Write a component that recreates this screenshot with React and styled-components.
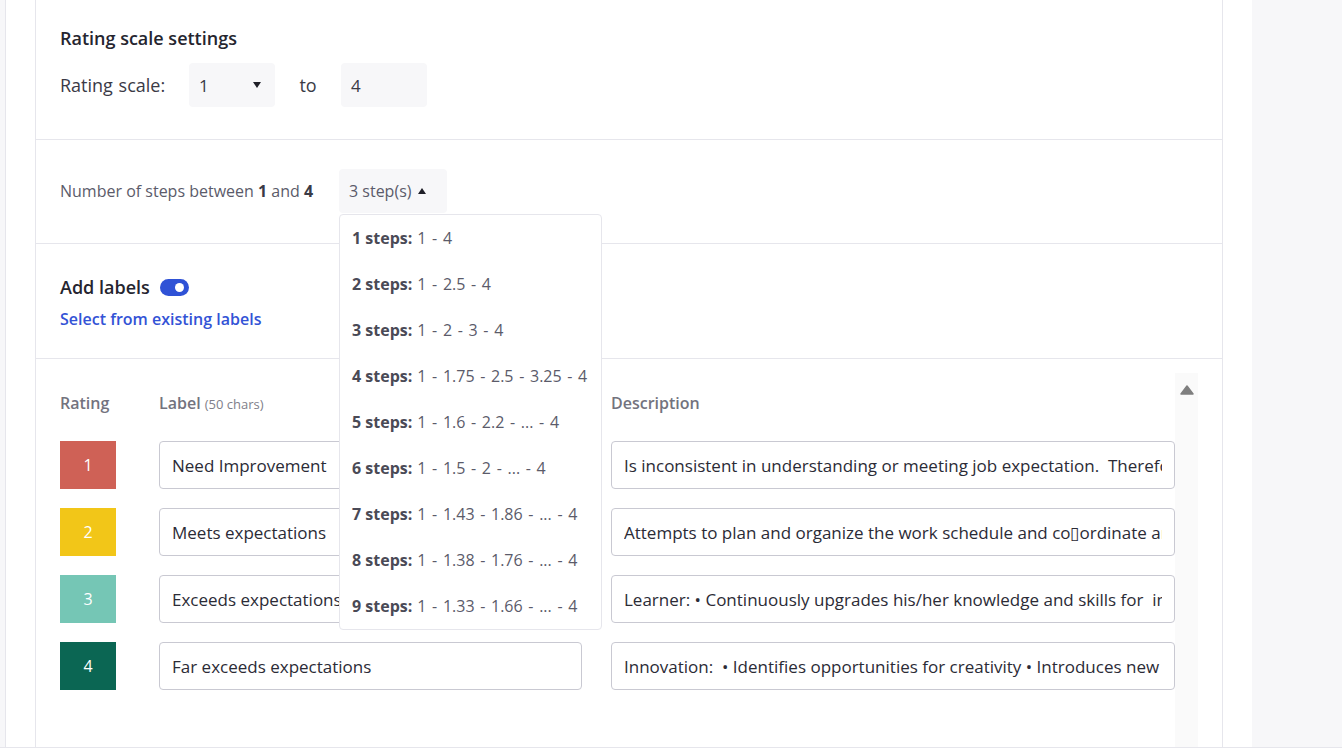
import React from "react";
import styled, { createGlobalStyle } from "styled-components";

const Global = createGlobalStyle`
  html, body { margin: 0; padding: 0; background: #ffffff; }
  body { font-family: "Open Sans", "Noto Sans", sans-serif; color: #2b2b36; }
  * { box-sizing: border-box; }
`;

const Page = styled.div`
  display: flex;
  height: 748px;
  border-bottom: 1px solid #e6e6ec;
  overflow: hidden;
`;

const Gutter = styled.div`
  width: 6px;
  flex: none;
  background: #f7f7f9;
  border-right: 1px solid #e6e6ec;
`;

const Main = styled.div`
  width: 1246px;
  flex: none;
  padding: 0 29px;
  background: #ffffff;
`;

const SidePane = styled.div`
  flex: 1;
  background: #f7f7f9;
`;

const Card = styled.div`
  height: 100%;
  border-left: 1px solid #e6e6ec;
  border-right: 1px solid #e6e6ec;
  position: relative;
`;

const Section = styled.div`
  padding: ${(p) => p.$pad};
  border-bottom: ${(p) => (p.$last ? "none" : "1px solid #e6e6ec")};
  position: relative;
`;

const Title = styled.div`
  font-size: 18px;
  font-weight: 600;
  line-height: 22px;
  color: #25252f;
  display: flex;
  align-items: center;
  gap: 10px;
`;

const ScaleRow = styled.div`
  display: flex;
  align-items: center;
  margin-top: 14px;
  font-size: 18px;
  color: #3a3a46;
`;

const ScaleLabel = styled.span`
  width: 129px;
  word-spacing: 1px;
`;

const ToWord = styled.span`
  width: 66px;
  text-align: center;
`;

const Field = styled.div`
  width: 86px;
  height: 44px;
  background: #f7f7f9;
  border-radius: 4px;
  display: flex;
  align-items: center;
  justify-content: space-between;
  padding: 0 14px 0 10px;
  font-size: 17px;
  color: #3a3a46;
`;

const Caret = styled.span`
  width: 0;
  height: 0;
  border-left: 4.5px solid transparent;
  border-right: 4.5px solid transparent;
  border-${(p) => (p.$up ? "bottom" : "top")}: 6px solid #1f1f28;
`;

const StepsRow = styled.div`
  display: flex;
  align-items: center;
  font-size: 16px;
  color: #5b5b6a;
`;

const StepsText = styled.span`
  width: 279px;
  b { color: #3a3a46; font-weight: 700; }
`;

const StepsButton = styled.div`
  width: 108px;
  height: 44px;
  background: #f7f7f9;
  border-radius: 4px;
  display: flex;
  align-items: center;
  gap: 7px;
  padding-left: 10px;
  font-size: 16px;
  color: #5b5b6a;
  position: relative;
`;

const Menu = styled.div`
  position: absolute;
  top: 45px;
  left: 0;
  width: 263px;
  background: #ffffff;
  border: 1px solid #e6e6ec;
  border-radius: 4px;
  z-index: 10;
`;

const MenuItem = styled.div`
  height: 46px;
  display: flex;
  align-items: center;
  padding-left: 12px;
  font-size: 16px;
  word-spacing: 1.5px;
  color: #5b5b6a;
  white-space: nowrap;
  b { color: #4a4a56; font-weight: 700; margin-right: 5px; word-spacing: 0; }
`;

const Toggle = styled.span`
  width: 29px;
  height: 17px;
  border-radius: 9px;
  background: #2f52d6;
  position: relative;
  &::after {
    content: "";
    position: absolute;
    right: 5px;
    top: 4px;
    width: 9px;
    height: 9px;
    border-radius: 50%;
    background: #fff;
  }
`;

const Link = styled.div`
  margin-top: 11px;
  font-size: 16px;
  font-weight: 600;
  line-height: 20px;
  color: #3353d6;
`;

const TableWrap = styled.div`
  display: flex;
  height: 400px;
`;

const Table = styled.div`
  flex: 1;
  min-width: 0;
  padding-top: 20px;
  display: grid;
  grid-template-columns: 99px 452px minmax(0, 1fr);
  grid-template-rows: 29px repeat(4, 48px);
  row-gap: 19px;
  align-content: start;
`;

const HeadCell = styled.div`
  height: 20px;
  line-height: 20px;
  font-size: 16px;
  font-weight: 600;
  color: #73737e;
  white-space: nowrap;
  small { font-size: 13px; font-weight: 400; color: #80808a; }
`;

const Row = styled.div`
  display: contents;
`;

const Swatch = styled.div`
  width: 56px;
  height: 48px;
  background: ${(p) => p.$color};
  color: #ffffff;
  font-size: 16px;
  display: flex;
  align-items: center;
  justify-content: center;
`;

const TextBox = styled.div`
  width: ${(p) => p.$w};
  min-width: 0;
  height: 48px;
  border: 1px solid #c9c9d2;
  border-radius: 4px;
  display: flex;
  align-items: center;
  padding: 0 12px;
  font-size: 17px;
  color: #2b2b36;
`;

const Clip = styled.span`
  flex: 1;
  min-width: 0;
  white-space: pre;
  overflow: hidden;
`;

const ScrollTrack = styled.div`
  width: 23px;
  flex: none;
  background: #fafafa;
  display: flex;
  justify-content: center;
  padding-top: 12px;
`;

const rows = [
  { n: 1, color: "#cf6156", label: "Need Improvement", desc: "Is inconsistent in understanding or meeting job expectation.  Therefore needs to improve" },
  { n: 2, color: "#f2c618", label: "Meets expectations", desc: "Attempts to plan and organize the work schedule and co\u25AFordinate and prioritize tasks" },
  { n: 3, color: "#75c6b5", label: "Exceeds expectations", desc: "Learner: \u2022 Continuously upgrades his/her knowledge and skills for  improvement" },
  { n: 4, color: "#0b6653", label: "Far exceeds expectations", desc: "Innovation:  \u2022 Identifies opportunities for creativity \u2022 Introduces new ideas" },
];

const steps = [
  ["1 steps:", "1 - 4"],
  ["2 steps:", "1 - 2.5 - 4"],
  ["3 steps:", "1 - 2 - 3 - 4"],
  ["4 steps:", "1 - 1.75 - 2.5 - 3.25 - 4"],
  ["5 steps:", "1 - 1.6 - 2.2 - ... - 4"],
  ["6 steps:", "1 - 1.5 - 2 - ... - 4"],
  ["7 steps:", "1 - 1.43 - 1.86 - ... - 4"],
  ["8 steps:", "1 - 1.38 - 1.76 - ... - 4"],
  ["9 steps:", "1 - 1.33 - 1.66 - ... - 4"],
];

export default function App() {
  return (
    <>
      <Global />
      <Page>
        <Gutter />
        <Main>
          <Card>
            <Section $pad="27px 24px 32px">
              <Title>Rating scale settings</Title>
              <ScaleRow>
                <ScaleLabel>Rating scale:</ScaleLabel>
                <Field>
                  1 <Caret />
                </Field>
                <ToWord>to</ToWord>
                <Field>4</Field>
              </ScaleRow>
            </Section>
            <Section $pad="29px 24px 30px">
              <StepsRow>
                <StepsText>
                  Number of steps between <b>1</b> and <b>4</b>
                </StepsText>
                <StepsButton>
                  3 step(s) <Caret $up />
                  <Menu>
                    {steps.map(([k, v]) => (
                      <MenuItem key={k}>
                        <b>{k}</b>
                        {v}
                      </MenuItem>
                    ))}
                  </Menu>
                </StepsButton>
              </StepsRow>
            </Section>
            <Section $pad="32px 24px 29px">
              <Title>
                Add labels <Toggle />
              </Title>
              <Link>Select from existing labels</Link>
            </Section>
            <Section $pad="14px 24px 0" $last>
              <TableWrap>
                <Table>
                  <Row>
                    <HeadCell>Rating</HeadCell>
                    <HeadCell>
                      Label <small>(50 chars)</small>
                    </HeadCell>
                    <HeadCell>Description</HeadCell>
                  </Row>
                  {rows.map((r) => (
                    <Row key={r.n}>
                      <Swatch $color={r.color}>{r.n}</Swatch>
                      <TextBox $w="423px">
                        <Clip>{r.label}</Clip>
                      </TextBox>
                      <TextBox $w="100%">
                        <Clip>{r.desc}</Clip>
                      </TextBox>
                    </Row>
                  ))}
                </Table>
                <ScrollTrack>
                  <svg width="14" height="10" viewBox="0 0 14 10">
                    <path d="M7 1 L13 9 L1 9 Z" fill="#7f7f7f" stroke="#7f7f7f" strokeLinejoin="round" strokeWidth="1.5" />
                  </svg>
                </ScrollTrack>
              </TableWrap>
            </Section>
          </Card>
        </Main>
        <SidePane />
      </Page>
    </>
  );
}
